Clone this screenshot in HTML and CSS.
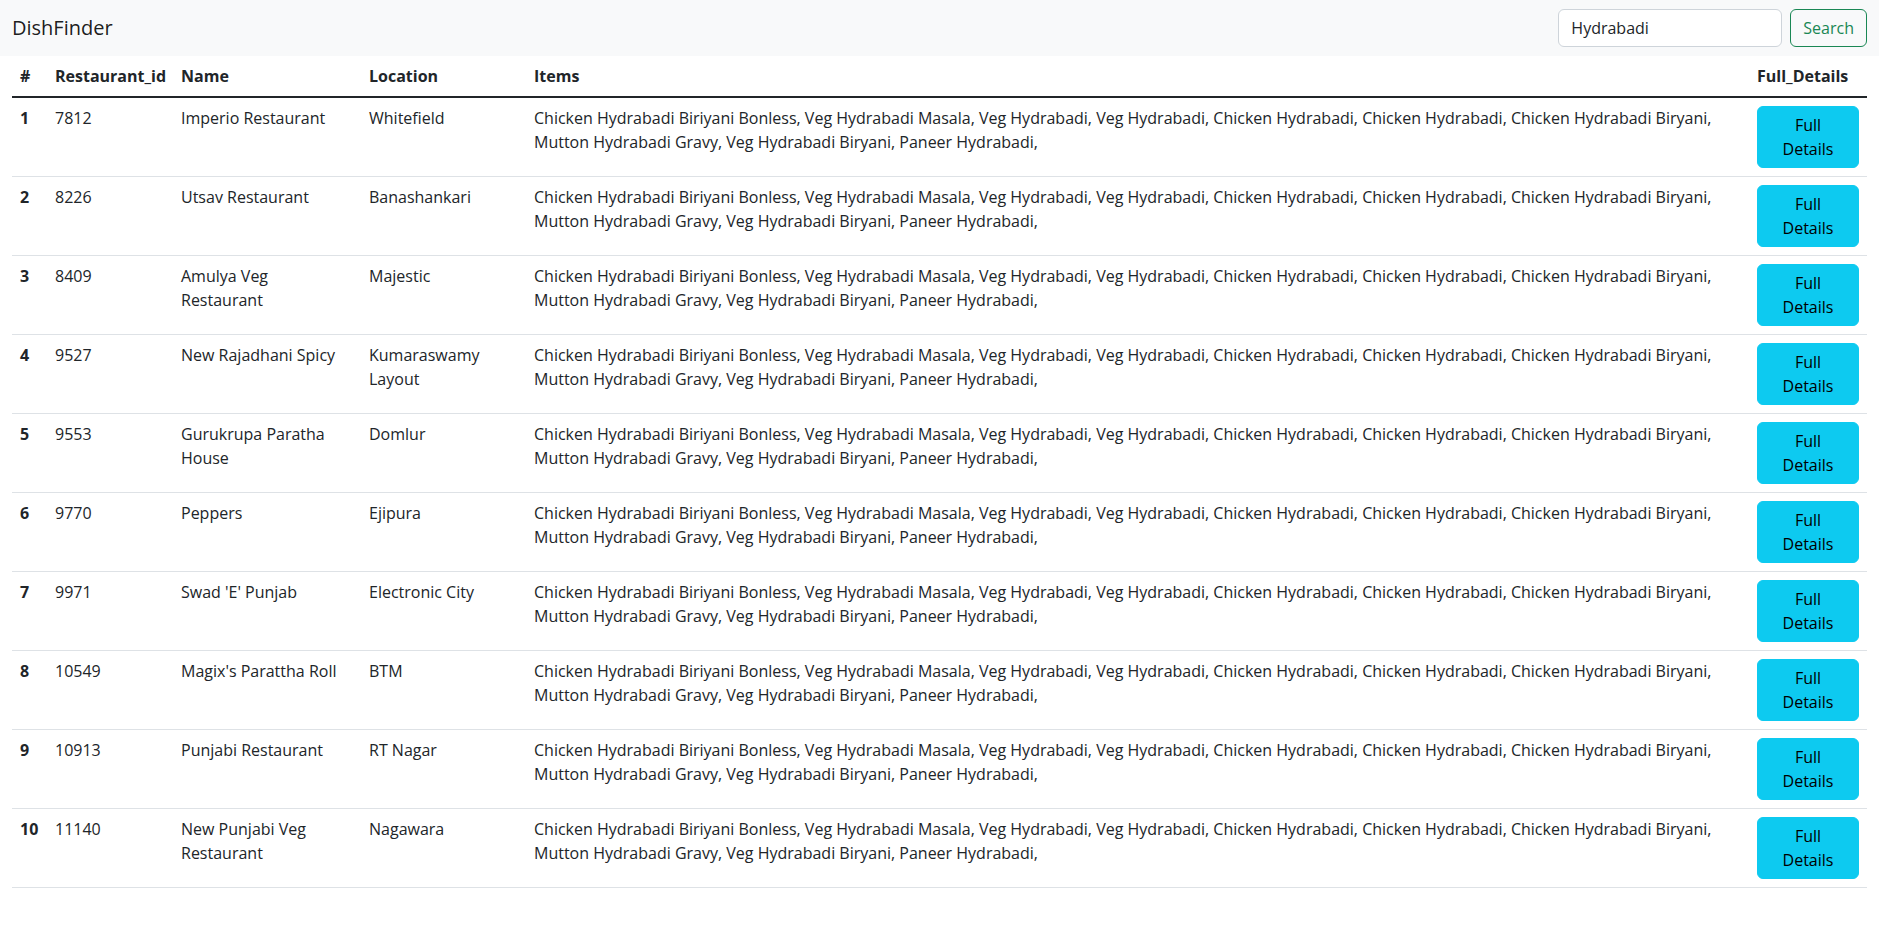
FILE: index.html
```html
<!DOCTYPE html>
<html lang="en">
<head>
<meta charset="utf-8">
<title>DishFinder</title>
<link rel="stylesheet" href="styles.css">
</head>
<body>
<nav class="navbar">
  <div class="nav-inner">
    <a class="brand" href="#">DishFinder</a>
    <form class="search-form">
      <input class="search-input" type="search" value="Hydrabadi" aria-label="Search">
      <button class="btn-search" type="button">Search</button>
    </form>
  </div>
</nav>
<div class="wrap">
<table class="tbl">
  <colgroup>
    <col class="c1"><col class="c2"><col class="c3"><col class="c4"><col class="c5"><col class="c6">
  </colgroup>
  <thead>
    <tr><th>#</th><th>Restaurant_id</th><th>Name</th><th>Location</th><th>Items</th><th>Full_Details</th></tr>
  </thead>
  <tbody>
    <tr><th>1</th><td>7812</td><td>Imperio Restaurant</td><td>Whitefield</td><td>Chicken Hydrabadi Biriyani Bonless, Veg Hydrabadi Masala, Veg Hydrabadi, Veg Hydrabadi, Chicken Hydrabadi, Chicken Hydrabadi, Chicken Hydrabadi Biryani, Mutton Hydrabadi Gravy, Veg Hydrabadi Biryani, Paneer Hydrabadi,</td><td><button class="btn-info" type="button">Full Details</button></td></tr>
    <tr><th>2</th><td>8226</td><td>Utsav Restaurant</td><td>Banashankari</td><td>Chicken Hydrabadi Biriyani Bonless, Veg Hydrabadi Masala, Veg Hydrabadi, Veg Hydrabadi, Chicken Hydrabadi, Chicken Hydrabadi, Chicken Hydrabadi Biryani, Mutton Hydrabadi Gravy, Veg Hydrabadi Biryani, Paneer Hydrabadi,</td><td><button class="btn-info" type="button">Full Details</button></td></tr>
    <tr><th>3</th><td>8409</td><td>Amulya Veg Restaurant</td><td>Majestic</td><td>Chicken Hydrabadi Biriyani Bonless, Veg Hydrabadi Masala, Veg Hydrabadi, Veg Hydrabadi, Chicken Hydrabadi, Chicken Hydrabadi, Chicken Hydrabadi Biryani, Mutton Hydrabadi Gravy, Veg Hydrabadi Biryani, Paneer Hydrabadi,</td><td><button class="btn-info" type="button">Full Details</button></td></tr>
    <tr><th>4</th><td>9527</td><td>New Rajadhani Spicy</td><td>Kumaraswamy Layout</td><td>Chicken Hydrabadi Biriyani Bonless, Veg Hydrabadi Masala, Veg Hydrabadi, Veg Hydrabadi, Chicken Hydrabadi, Chicken Hydrabadi, Chicken Hydrabadi Biryani, Mutton Hydrabadi Gravy, Veg Hydrabadi Biryani, Paneer Hydrabadi,</td><td><button class="btn-info" type="button">Full Details</button></td></tr>
    <tr><th>5</th><td>9553</td><td>Gurukrupa Paratha House</td><td>Domlur</td><td>Chicken Hydrabadi Biriyani Bonless, Veg Hydrabadi Masala, Veg Hydrabadi, Veg Hydrabadi, Chicken Hydrabadi, Chicken Hydrabadi, Chicken Hydrabadi Biryani, Mutton Hydrabadi Gravy, Veg Hydrabadi Biryani, Paneer Hydrabadi,</td><td><button class="btn-info" type="button">Full Details</button></td></tr>
    <tr><th>6</th><td>9770</td><td>Peppers</td><td>Ejipura</td><td>Chicken Hydrabadi Biriyani Bonless, Veg Hydrabadi Masala, Veg Hydrabadi, Veg Hydrabadi, Chicken Hydrabadi, Chicken Hydrabadi, Chicken Hydrabadi Biryani, Mutton Hydrabadi Gravy, Veg Hydrabadi Biryani, Paneer Hydrabadi,</td><td><button class="btn-info" type="button">Full Details</button></td></tr>
    <tr><th>7</th><td>9971</td><td>Swad 'E' Punjab</td><td>Electronic City</td><td>Chicken Hydrabadi Biriyani Bonless, Veg Hydrabadi Masala, Veg Hydrabadi, Veg Hydrabadi, Chicken Hydrabadi, Chicken Hydrabadi, Chicken Hydrabadi Biryani, Mutton Hydrabadi Gravy, Veg Hydrabadi Biryani, Paneer Hydrabadi,</td><td><button class="btn-info" type="button">Full Details</button></td></tr>
    <tr><th>8</th><td>10549</td><td>Magix's Parattha Roll</td><td>BTM</td><td>Chicken Hydrabadi Biriyani Bonless, Veg Hydrabadi Masala, Veg Hydrabadi, Veg Hydrabadi, Chicken Hydrabadi, Chicken Hydrabadi, Chicken Hydrabadi Biryani, Mutton Hydrabadi Gravy, Veg Hydrabadi Biryani, Paneer Hydrabadi,</td><td><button class="btn-info" type="button">Full Details</button></td></tr>
    <tr><th>9</th><td>10913</td><td>Punjabi Restaurant</td><td>RT Nagar</td><td>Chicken Hydrabadi Biriyani Bonless, Veg Hydrabadi Masala, Veg Hydrabadi, Veg Hydrabadi, Chicken Hydrabadi, Chicken Hydrabadi, Chicken Hydrabadi Biryani, Mutton Hydrabadi Gravy, Veg Hydrabadi Biryani, Paneer Hydrabadi,</td><td><button class="btn-info" type="button">Full Details</button></td></tr>
    <tr><th>10</th><td>11140</td><td>New Punjabi Veg Restaurant</td><td>Nagawara</td><td>Chicken Hydrabadi Biriyani Bonless, Veg Hydrabadi Masala, Veg Hydrabadi, Veg Hydrabadi, Chicken Hydrabadi, Chicken Hydrabadi, Chicken Hydrabadi Biryani, Mutton Hydrabadi Gravy, Veg Hydrabadi Biryani, Paneer Hydrabadi,</td><td><button class="btn-info" type="button">Full Details</button></td></tr>
  </tbody>
</table>
</div>
</body>
</html>
```
FILE: styles.css
```css
* { box-sizing: border-box; }
html, body { margin: 0; }
body {
  font-family: "Open Sans", "Noto Sans", sans-serif;
  font-size: 16px;
  line-height: 1.5;
  color: #212529;
  background: #fff;
}
.navbar {
  background: #f8f9fa;
  padding: 8px 0;
}
.nav-inner {
  display: flex;
  align-items: center;
  justify-content: space-between;
  padding: 0 12px;
}
.brand {
  font-size: 20px;
  line-height: 30px;
  padding: 5px 0;
  color: rgba(0,0,0,.9);
  text-decoration: none;
}
.search-form {
  display: flex;
  gap: 8px;
}
.search-input {
  width: 224px;
  height: 38px;
  padding: 6px 12px;
  font: inherit;
  font-size: 16px;
  color: #212529;
  background: #fff;
  border: 1px solid #ced4da;
  border-radius: 6px;
  outline: none;
}
.btn-search {
  height: 38px;
  padding: 6px 12px;
  font: inherit;
  font-size: 16px;
  color: #198754;
  background: transparent;
  border: 1px solid #198754;
  border-radius: 6px;
}
.wrap { padding: 0 12px; }
.tbl {
  width: 100%;
  table-layout: fixed;
  border-collapse: collapse;
  vertical-align: top;
}
.c1 { width: 35px; }
.c2 { width: 126px; }
.c3 { width: 188px; }
.c4 { width: 165px; }
.c5 { width: 1223px; }
.c6 { width: 118px; }
.tbl th, .tbl td {
  padding: 8px;
  text-align: left;
  vertical-align: top;
  border-bottom: 1px solid #dee2e6;
}
.tbl thead th {
  font-weight: 700;
  border-bottom: 2px solid #212529;
}
.tbl tbody th { font-weight: 700; }
.btn-info {
  display: block;
  width: 100%;
  padding: 6px 12px;
  font: inherit;
  font-size: 16px;
  line-height: 24px;
  color: #000;
  background: #0dcaf0;
  border: 1px solid #0dcaf0;
  border-radius: 6px;
  text-align: center;
}
```
